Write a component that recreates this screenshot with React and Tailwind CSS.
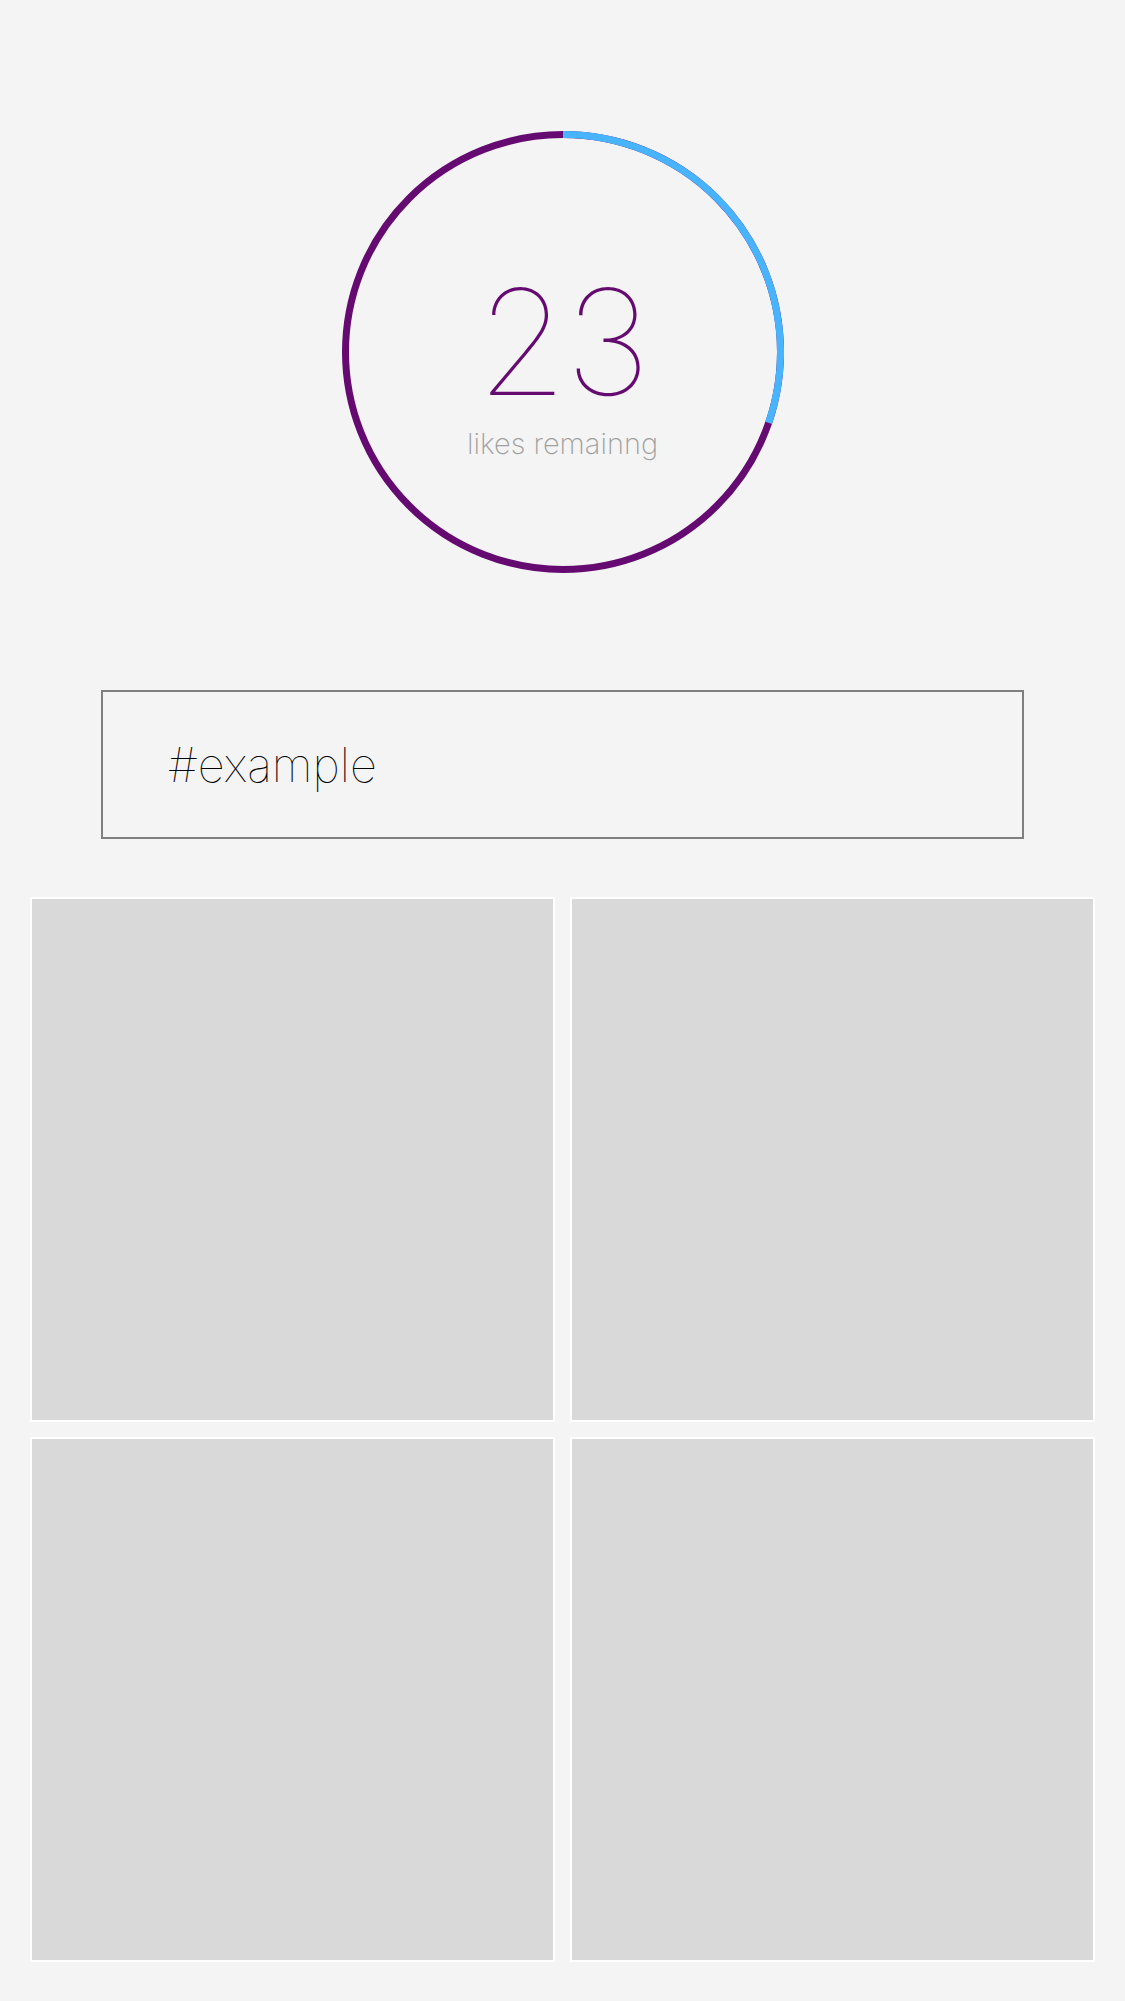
export default function App() {
  const r = 217.5;
  const c = 221;
  const theta = (109 * Math.PI) / 180;
  const ex = c + r * Math.sin(theta);
  const ey = c - r * Math.cos(theta);
  return (
    <div className="min-h-screen bg-[#f4f4f4] flex flex-col items-center pt-[131px] pb-[39px] font-['Inter',sans-serif]">
      <div className="relative w-[442px] h-[442px]">
        <svg className="absolute inset-0" width="442" height="442" viewBox="0 0 442 442">
          <circle cx={c} cy={c} r={r} fill="none" stroke="#650a70" strokeWidth="7" />
          <path
            d={`M ${c} ${c - r} A ${r} ${r} 0 0 1 ${ex.toFixed(2)} ${ey.toFixed(2)}`}
            fill="none"
            stroke="#47b4fd"
            strokeWidth="7"
          />
        </svg>
        <div className="absolute inset-x-0 top-[152px] flex flex-col items-center">
          <div className="text-[146px] leading-[118px] font-thin text-[#650a70] tracking-[-2px]">23</div>
          <div className="mt-[28px] text-[29px] leading-none font-extralight text-[#a0a0a0]">likes remainng</div>
        </div>
      </div>
      <div className="mt-[117px] w-[923px] h-[149px] border-2 border-[#7f7f7f] flex items-center pl-[65px]">
        <span className="text-[47px] leading-none font-thin text-black">#example</span>
      </div>
      <div className="mt-[58px] w-[1065px] grid grid-cols-2 gap-[15px]">
        <div className="aspect-square border-2 border-white bg-[#d9d9d9]" />
        <div className="aspect-square border-2 border-white bg-[#d9d9d9]" />
        <div className="aspect-square border-2 border-white bg-[#d9d9d9]" />
        <div className="aspect-square border-2 border-white bg-[#d9d9d9]" />
      </div>
    </div>
  );
}
